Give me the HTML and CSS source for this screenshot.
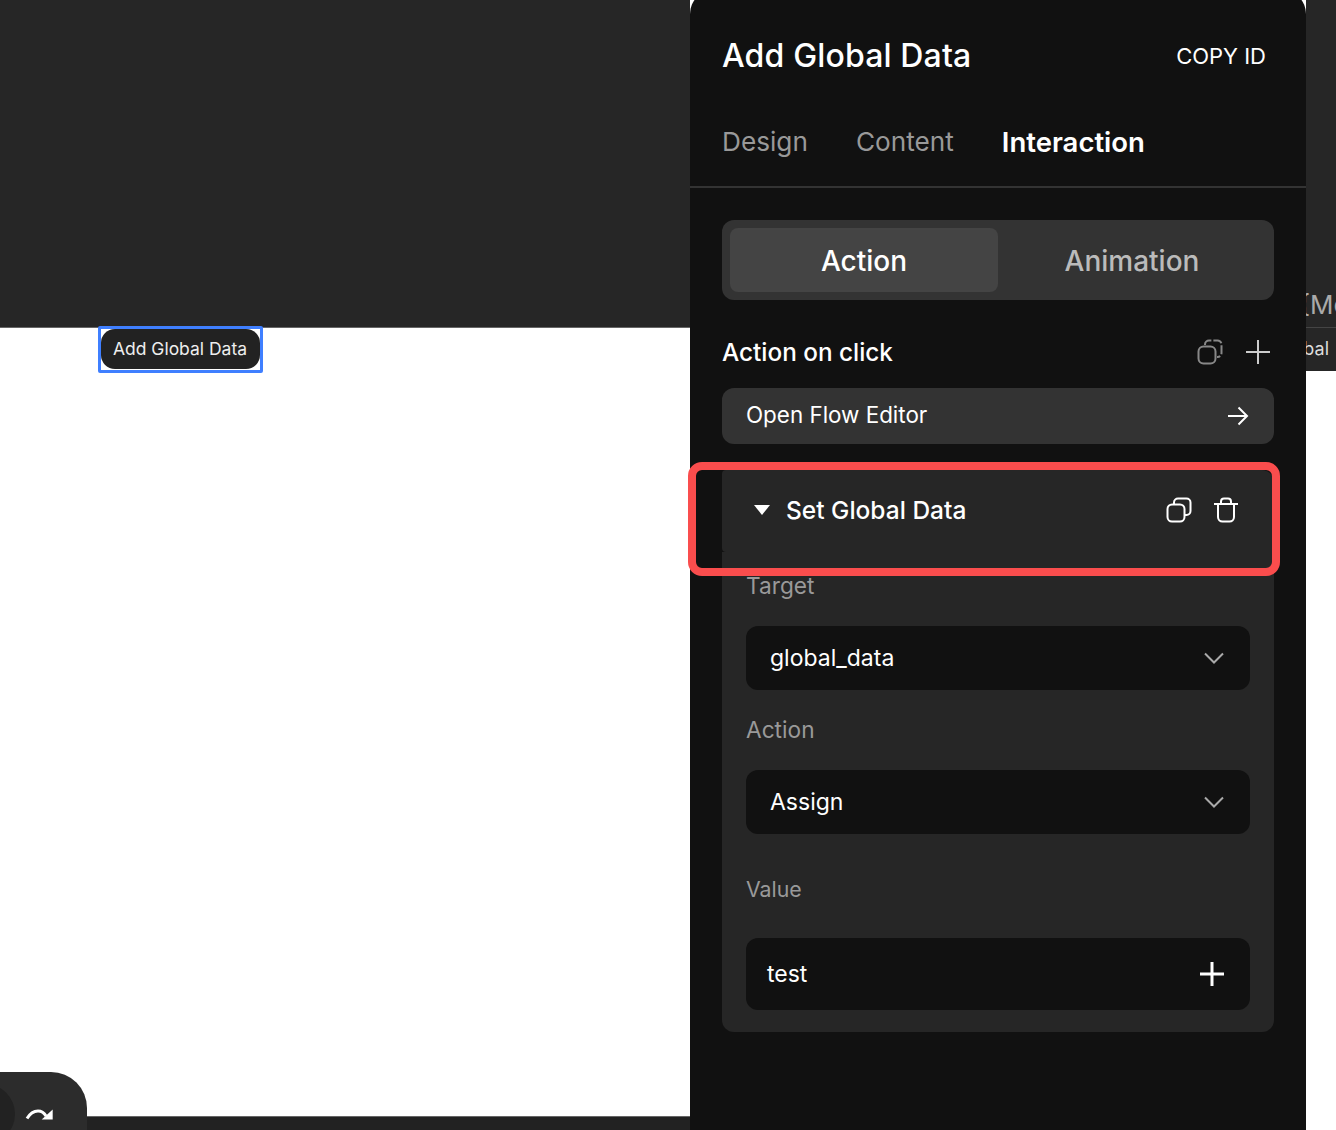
FILE: index.html
```html
<!DOCTYPE html>
<html lang="en">
<head>
    <meta charset="UTF-8">
    <title>Add Global Data</title>
    <link rel="stylesheet" href="styles.css">
</head>
<body>
<div id="contain">
    <div class="canvas">
        <div class="canvas-top"></div>
        <div class="canvas-page">
            <div class="selected">
                <button class="pill">Add Global Data</button>
            </div>
            <div class="history">
                <span class="history-undo"></span>
                <svg class="history-redo" width="30" height="16" viewBox="0 0 30 16">
                    <path d="M3 12.500C6 7.500 10 5 14 5c3 0 6 1.500 8 5" fill="none" stroke="#fff" stroke-width="3"/>
                    <path d="M28.700 3.500v10h-11z" fill="#fff"/>
                </svg>
            </div>
        </div>
        <div class="canvas-bottom"></div>
    </div>

    <div class="panel">
        <div class="panel-head">
            <h1>Add Global Data</h1>
            <span class="copy-id">COPY ID</span>
        </div>
        <div class="tabs">
            <span class="tab">Design</span>
            <span class="tab">Content</span>
            <span class="tab active">Interaction</span>
        </div>
        <div class="panel-body">
            <div class="segment">
                <span class="segment-item active">Action</span>
                <span class="segment-item">Animation</span>
            </div>
            <div class="action-head">
                <span class="action-title">Action on click</span>
                <svg class="copy-dim" width="26" height="26" viewBox="0 0 26 26" fill="none" stroke="#888" stroke-width="2">
                    <rect x="1.500" y="7.500" width="17" height="17" rx="5"/>
                    <path d="M8 6V5.500a4 4 0 0 1 4-4h8.500a4 4 0 0 1 4 4V14a4 4 0 0 1-4 4H20" stroke-dasharray="9 2"/>
                </svg>
                <svg class="add-icon" width="24" height="24" viewBox="0 0 24 24" stroke="#ccc" stroke-width="2">
                    <path d="M0 12h24M12 0v24"/>
                </svg>
            </div>
            <div class="flow-btn">
                <span>Open Flow Editor</span>
                <svg width="22" height="20" viewBox="0 0 22 20" fill="none" stroke="#fff" stroke-width="2">
                    <path d="M1 10h19M11.500 1.500 20 10l-8.500 8.500"/>
                </svg>
            </div>
            <div class="card">
                <div class="card-head">
                    <span class="caret"></span>
                    <span class="card-title">Set Global Data</span>
                    <svg width="26" height="26" viewBox="0 0 26 26" fill="none" stroke="#fff" stroke-width="2">
                        <rect x="1.500" y="7.500" width="17" height="17" rx="4.500"/>
                        <path d="M8 7V5.500a4 4 0 0 1 4-4h8.500a4 4 0 0 1 4 4V14a4 4 0 0 1-4 4H19"/>
                    </svg>
                    <svg class="trash" width="24" height="26" viewBox="0 0 24 26" fill="none" stroke="#fff" stroke-width="2">
                        <path d="M0 7h24M7 7V4.500a3 3 0 0 1 3-3h4a3 3 0 0 1 3 3V7M4 7v13a4.500 4.500 0 0 0 4.500 4.500h7A4.500 4.500 0 0 0 20 20V7"/>
                    </svg>
                </div>
                <div class="card-body">
                    <label class="field-label first">Target</label>
                    <div class="select">
                        <span>global_data</span>
                        <svg width="20" height="12" viewBox="0 0 20 12" fill="none" stroke="#aaa" stroke-width="2"><path d="M1 1.500l9 9 9-9"/></svg>
                    </div>
                    <label class="field-label">Action</label>
                    <div class="select">
                        <span>Assign</span>
                        <svg width="20" height="12" viewBox="0 0 20 12" fill="none" stroke="#aaa" stroke-width="2"><path d="M1 1.500l9 9 9-9"/></svg>
                    </div>
                    <label class="field-label value">Value</label>
                    <div class="value-input">
                        <span>test</span>
                        <svg width="24" height="24" viewBox="0 0 24 24" stroke="#fff" stroke-width="3"><path d="M0 12h24M12 0v24"/></svg>
                    </div>
                </div>
            </div>
        </div>
        <div class="highlight"></div>
    </div>

    <div class="side">
        <div class="side-top"><span>{Mo</span></div>
        <div class="side-row"><span>Global</span></div>
    </div>
</div>
</body>
</html>
```

FILE: styles.css
```css
* {
    margin: 0;
    padding: 0;
    box-sizing: border-box;
}

html, body {
    height: 1130px;
    overflow: hidden;
    background: #fff;
}

body {
    font-family: Inter, "Liberation Sans", sans-serif;
}

#contain {
    display: flex;
    height: 1130px;
    width: 1336px;
}

.canvas {
    width: 690px;
    display: flex;
    flex-direction: column;
}

.canvas-top {
    height: 328px;
    background: #262626;
    border-bottom: 1px solid #666;
}

.canvas-page {
    position: relative;
    height: 788px;
    background: #fff;
}

.canvas-bottom {
    height: 14px;
    background: #222;
    border-top: 1px solid #666;
}

.selected {
    width: 165px;
    height: 47px;
    margin: -2.500px 0 0 98px;
    border: 3px solid #3f7fff;
    border-radius: 2px;
    background: #fff;
    position: relative;
}

.pill {
    display: block;
    width: 159px;
    height: 40px;
    border: 0;
    border-radius: 14px;
    padding-right: 1px;
    background: #222;
    color: #eee;
    font-family: inherit;
    font-size: 17.500px;
}

.history {
    position: absolute;
    left: 0;
    top: 744px;
    width: 87px;
    height: 60px;
    overflow: hidden;
    background: #2c2c2c;
    border-top-right-radius: 36px;
}

.history-undo {
    position: absolute;
    left: -45px;
    top: 12px;
    width: 60px;
    height: 60px;
    border-radius: 50%;
    background: #222;
}

.history-redo {
    position: absolute;
    left: 24px;
    top: 34px;
}

.panel {
    position: relative;
    width: 616px;
    margin-top: -10px;
    background: #111;
    border-radius: 24px 24px 0 0;
    color: #fff;
}

.panel-head {
    display: flex;
    justify-content: space-between;
    align-items: center;
    padding: 30px 40px 0 32px;
    height: 102px;
}

.panel-head h1 {
    font-size: 32px;
    font-weight: 500;
    line-height: 40px;
    letter-spacing: 0.15px;
}

.copy-id {
    font-size: 22px;
}

.tabs {
    display: flex;
    gap: 48px;
    padding: 30px 32px 0;
    height: 96px;
    align-items: flex-start;
    border-bottom: 2px solid #333;
}

.tab {
    font-size: 26.200px;
    line-height: 40px;
    color: #999;
}

.tab.active {
    color: #fff;
    font-size: 27.500px;
    font-weight: 600;
}

.panel-body {
    padding: 32px 32px 0;
}

.segment {
    display: flex;
    height: 80px;
    padding: 8px;
    background: #333;
    border-radius: 12px;
}

.segment-item {
    flex: 1;
    display: flex;
    align-items: center;
    justify-content: center;
    padding-top: 2px;
    font-size: 28px;
    font-weight: 500;
    color: #bbb;
    border-radius: 8px;
}

.segment-item.active {
    background: #444;
    color: #fff;
}

.action-head {
    display: flex;
    align-items: center;
    gap: 22px;
    margin-top: 32px;
    padding-right: 4px;
    height: 40px;
}

.action-title {
    flex: 1;
    font-size: 24.300px;
    font-weight: 500;
}

.copy-dim {
    margin-right: 1px;
}

.flow-btn {
    display: flex;
    justify-content: space-between;
    align-items: center;
    height: 56px;
    margin-top: 16px;
    padding: 0 25px 0 24px;
    background: #333;
    border-radius: 12px;
    font-size: 22.400px;
}

.flow-btn span {
    margin-top: -3px;
}

.card {
    margin-top: 26px;
}

.card-head {
    display: flex;
    align-items: center;
    gap: 22px;
    height: 82px;
    padding: 0 36px 2px 32px;
    background: #262626;
    border-radius: 4px 12px 0 4px;
}

.caret {
    width: 0;
    height: 0;
    margin-right: -6px;
    border-left: 8px solid transparent;
    border-right: 8px solid transparent;
    border-top: 10px solid #fff;
}

.card-title {
    flex: 1;
    font-size: 24.500px;
    font-weight: 500;
}

.card-body {
    padding: 0 24px 22px;
    background: #262626;
    border-radius: 0 0 12px 12px;
}

.field-label {
    display: block;
    font-size: 22.700px;
    line-height: 40px;
    color: #999;
    padding-top: 20px;
    height: 80px;
}

.field-label.first {
    height: 74px;
    padding-top: 14px;
}

.field-label.value {
    height: 104px;
    padding-top: 35px;
    font-size: 21.300px;
}

.select, .value-input {
    display: flex;
    justify-content: space-between;
    align-items: center;
    height: 64px;
    padding: 0 26px 0 24px;
    background: #111;
    border-radius: 12px;
    font-size: 23px;
}

.value-input {
    height: 72px;
    padding: 0 26px 0 21px;
}

.highlight {
    position: absolute;
    left: -2px;
    top: 472px;
    width: 592px;
    height: 114px;
    border: 8px solid #fa4d4d;
    border-radius: 14px;
}

.side {
    flex: 1;
    overflow: hidden;
    background: #262626;
    height: 371px;
    color: #aaa;
}

.side-top {
    height: 328px;
    border-bottom: 1px solid #444;
    padding-top: 285px;
    font-size: 26px;
    line-height: 40px;
}

.side-top span {
    display: block;
    margin-left: -7px;
    white-space: nowrap;
}

.side-row {
    display: flex;
    justify-content: flex-end;
    padding-right: 7px;
    font-size: 18px;
    line-height: 42px;
    color: #ddd;
    white-space: nowrap;
}
```
